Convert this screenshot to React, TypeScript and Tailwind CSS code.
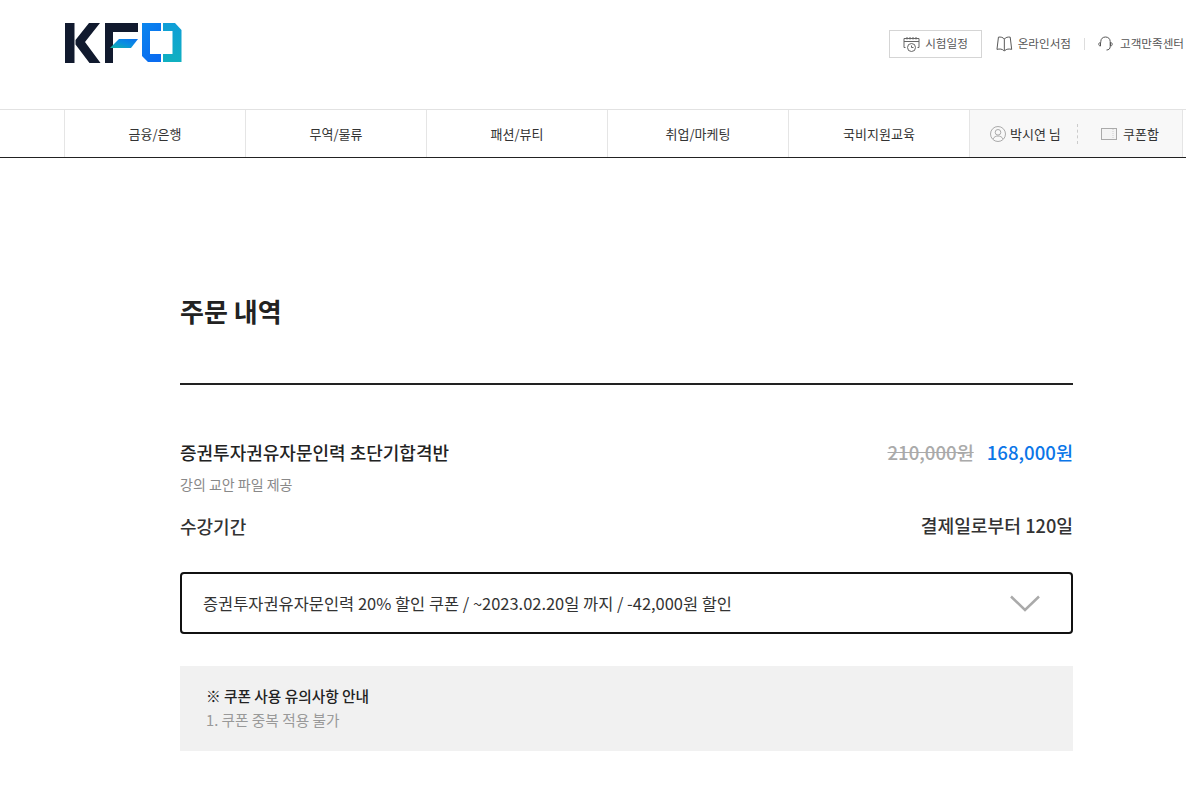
import React from 'react';

const navItems = ['금융/은행', '무역/물류', '패션/뷰티', '취업/마케팅', '국비지원교육'];

const Logo = () => (
    <svg width="117" height="41" viewBox="0 0 117 41" fill="none">
        <defs>
            <linearGradient id="kfoBlue" x1="0" y1="0" x2="0.6" y2="1">
                <stop offset="0" stopColor="#0a86ee" />
                <stop offset="1" stopColor="#0a6cf0" />
            </linearGradient>
            <linearGradient id="kfoTeal" x1="0" y1="0" x2="0" y2="1">
                <stop offset="0" stopColor="#0f9ed8" />
                <stop offset="1" stopColor="#10b0c0" />
            </linearGradient>
            <linearGradient id="kfoWing" x1="0" y1="1" x2="1" y2="0">
                <stop offset="0" stopColor="#12b5a5" />
                <stop offset="0.5" stopColor="#0a8fe0" />
                <stop offset="1" stopColor="#0a70ee" />
            </linearGradient>
        </defs>
        <path d="M0 0H9.500V40H0Z" fill="#111a2e" />
        <path d="M10.500 17L24 0H35L20 19L35.500 40H24.500L10.500 21.500Z" fill="#111a2e" />
        <path d="M40 0H73V9H48V40H40Z" fill="#111a2e" />
        <path d="M45 25L54 16H73L66 25Z" fill="url(#kfoWing)" />
        <path d="M77 0H96V8H85V31H96V39H83L77 33Z" fill="url(#kfoBlue)" />
        <path d="M98 0H110L116.500 7V39H98V31H107.500V8H98Z" fill="url(#kfoTeal)" />
    </svg>
);

const CalendarIcon = () => (
    <svg width="17" height="17" viewBox="0 0 17 17" fill="none" stroke="#666" strokeWidth="1">
        <path d="M2.500 11.500H1V2.500H16V11.500H14.500" />
        <path d="M1 5.500H16" />
        <path d="M4 1V3.500M7 1V3.500M10 1V3.500M13 1V3.500" />
        <circle cx="8.500" cy="11.500" r="4" />
        <path d="M8.500 9.500V11.500H10.500" />
    </svg>
);

const BookIcon = () => (
    <svg width="17" height="16" viewBox="0 0 17 16" fill="none" stroke="#555" strokeWidth="1">
        <path d="M8.500 3C7.500 1.200 4.500 .6 2.500 1L1 13.500C3.500 12.800 6.500 13 8 14.800H9C10.500 13 13.500 12.800 16 13.500L14.500 1C12.500 .6 9.500 1.200 8.500 3Z" />
        <path d="M8.500 3V14.500" />
    </svg>
);

const HeadsetIcon = () => (
    <svg width="15" height="16" viewBox="0 0 15 16" fill="none" stroke="#555" strokeWidth="1">
        <path d="M2.800 6.500V5.500C2.800 2.800 4.800 1 7.500 1S12.200 2.800 12.200 5.500V10.500C12.200 12.800 10.800 14 8.500 14" />
        <path d="M2.500 6.500C1.300 6.500 .8 7.300 .8 8.200S1.300 10 2.500 10Z" />
        <path d="M12.500 6.500C13.700 6.500 14.200 7.300 14.200 8.200S13.700 10 12.500 10Z" />
    </svg>
);

const UserIcon = () => (
    <svg width="16" height="16" viewBox="0 0 16 16" fill="none" stroke="#aaa" strokeWidth="1">
        <circle cx="8" cy="8" r="7.500" />
        <circle cx="8" cy="6.300" r="2.800" />
        <path d="M3 13C4 10.800 6 10 8 10S12 10.800 13 13" />
    </svg>
);

const CouponIcon = () => (
    <svg width="16" height="12" viewBox="0 0 16 12" fill="none">
        <rect x=".5" y=".5" width="15" height="11" fill="#f4f4f4" stroke="#aaa" />
        <path d="M12 1V11" stroke="#ccc" strokeDasharray="1 1" />
    </svg>
);

export default function App() {
    return (
        <div className="min-h-[794px] bg-white text-[#222] font-['Noto_Sans_CJK_KR','Noto_Sans',sans-serif] overflow-hidden">
            <header className="h-[109px] flex justify-between pl-[65px]">
                <div className="pt-[23px]">
                    <Logo />
                </div>
                <div className="flex items-start pt-[30px] text-[11.6px] text-[#555] whitespace-nowrap">
                    <a className="w-[93px] h-[28px] border border-[#d5d5d5] flex items-center justify-center gap-[5px]">
                        <CalendarIcon />
                        <span>시험일정</span>
                    </a>
                    <a className="w-[75px] h-[28px] ml-[14px] flex items-center gap-[5px]">
                        <BookIcon />
                        <span>온라인서점</span>
                    </a>
                    <div className="w-px h-[12px] bg-[#ddd] mt-[8px] mx-[13px]"></div>
                    <a className="h-[28px] flex items-center gap-[7px] w-[88px]">
                        <HeadsetIcon />
                        <span>고객만족센터</span>
                    </a>
                </div>
            </header>

            <nav className="h-[49px] border-t border-b border-t-[#e2e2e2] border-b-[#222] pl-[64px] flex text-[13px] text-[#333]">
                {navItems.map((item) => (
                    <div key={item} className="w-[181px] border-l border-[#e5e5e5] flex items-center justify-center">
                        {item}
                    </div>
                ))}
                <div className="w-[214px] border-x border-[#e5e5e5] bg-[#f8f8f8] flex items-center">
                    <div className="w-[108px] pl-[20px] flex items-center gap-[4px] border-r border-dashed border-[#ccc] h-[20px]">
                        <UserIcon />
                        <span>박시연 님</span>
                    </div>
                    <div className="flex-1 flex items-center justify-center gap-[6px]">
                        <CouponIcon />
                        <span>쿠폰함</span>
                    </div>
                </div>
            </nav>

            <main className="w-[893px] ml-[180px]">
                <h1 className="mt-[133px] h-[40px] text-[26px] leading-[40px] font-bold text-[#222]">주문 내역</h1>
                <div className="mt-[52px] border-t-2 border-[#222]"></div>

                <div className="mt-[52px] flex justify-between items-center h-[30px]">
                    <div className="text-[18px] font-medium">증권투자권유자문인력 초단기합격반</div>
                    <div className="flex items-center gap-[13px] text-[18.6px] font-medium">
                        <span className="text-[#aaa] line-through">210,000원</span>
                        <span className="text-[#0b76e8]">168,000원</span>
                    </div>
                </div>
                <p className="mt-[7px] text-[14px] leading-[20px] text-[#888]">강의 교안 파일 제공</p>

                <div className="mt-[17px] flex justify-between items-center h-[30px] text-[18px] font-medium text-[#333]">
                    <span>수강기간</span>
                    <span className="text-[18.2px]">결제일로부터 120일</span>
                </div>

                <div className="mt-[31px] h-[62px] border-2 border-[#111] rounded-[4px] flex items-center justify-between pl-[21px] pr-[31px] text-[16.45px] text-[#333]">
                    <span>증권투자권유자문인력 20% 할인 쿠폰 / ~2023.02.20일 까지 / -42,000원 할인</span>
                    <svg width="30" height="17" viewBox="0 0 30 17" fill="none" stroke="#aaa" strokeWidth="2.500">
                        <path d="M1 1.500L15 15L29 1.500" />
                    </svg>
                </div>

                <div className="mt-[32px] h-[85px] bg-[#f1f1f1] pl-[26px] pt-[18px] text-[14.7px] leading-[24px]">
                    <p className="font-medium text-[#222]">※ 쿠폰 사용 유의사항 안내</p>
                    <p className="text-[#999]">1. 쿠폰 중복 적용 불가</p>
                </div>
            </main>
        </div>
    );
}
